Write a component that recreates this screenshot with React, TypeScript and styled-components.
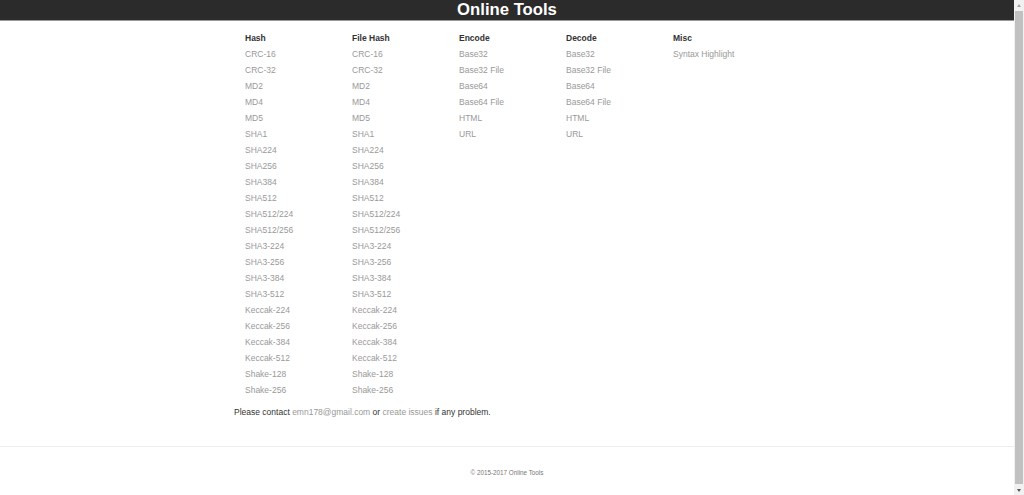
import React from "react";
import styled, { createGlobalStyle } from "styled-components";

const Global = createGlobalStyle`
  html, body { margin: 0; padding: 0; background: #fff; }
  body { font-family: "Liberation Sans", Arial, sans-serif; color: #333; }
`;

const Window = styled.div`
  display: flex;
  align-items: flex-start;
`;

const Page = styled.div`
  flex: 1;
  min-width: 0;
  min-height: 501px;
  display: flex;
  flex-direction: column;
`;

const ScrollBar = styled.div`
  position: sticky;
  top: 0;
  width: 10px;
  height: 495px;
  background: #f1f1f1;
  display: flex;
  flex-direction: column;
  align-items: center;
  flex-shrink: 0;
`;

const Arrow = styled.div<{ $down?: boolean }>`
  height: 10px;
  width: 10px;
  display: flex;
  align-items: center;
  justify-content: center;
  &::after {
    content: "";
    width: 0;
    height: 0;
    border-left: 2.5px solid transparent;
    border-right: 2.5px solid transparent;
    ${(p) => (p.$down ? "border-top: 3px solid #555;" : "border-bottom: 3px solid #a3a3a3;")}
  }
`;

const Thumb = styled.div`
  flex: 1;
  width: 8px;
  background: #c1c1c1;
  margin: 1px 0;
`;

const Header = styled.header`
  height: 20px;
  background: #2b2b2b;
  border-bottom: 1px solid #999;
  display: flex;
  align-items: center;
  justify-content: center;
`;

const Title = styled.h1`
  margin: 0;
  color: #fff;
  font-size: 16.7px;
  font-weight: bold;
  line-height: 20px;
`;

const Container = styled.main`
  width: 546px;
  margin: 0 auto;
  padding-top: 9px;
`;

const Columns = styled.div`
  display: grid;
  grid-template-columns: repeat(5, 107px);
  padding-left: 11px;
`;

const Column = styled.div`
  display: flex;
  flex-direction: column;
`;

const ColTitle = styled.div`
  font-size: 8.5px;
  font-weight: bold;
  color: #333;
  line-height: 16px;
`;

const ToolLink = styled.a`
  font-size: 8.5px;
  color: #999;
  line-height: 16px;
  text-decoration: none;
`;

const Contact = styled.p`
  margin: 6px 0 0;
  font-size: 8.5px;
  line-height: 16px;
  color: #333;
`;

const InlineLink = styled.a`
  color: #999;
  text-decoration: none;
`;

const Footer = styled.footer`
  margin-top: 26px;
  border-top: 1px solid #eee;
  height: 50px;
  display: flex;
  align-items: center;
  justify-content: center;
  font-size: 6.3px;
  color: #777;
`;

const hashes = [
  "CRC-16", "CRC-32", "MD2", "MD4", "MD5", "SHA1", "SHA224", "SHA256", "SHA384",
  "SHA512", "SHA512/224", "SHA512/256", "SHA3-224", "SHA3-256", "SHA3-384", "SHA3-512",
  "Keccak-224", "Keccak-256", "Keccak-384", "Keccak-512", "Shake-128", "Shake-256",
];
const codecs = ["Base32", "Base32 File", "Base64", "Base64 File", "HTML", "URL"];

const groups: { title: string; items: string[] }[] = [
  { title: "Hash", items: hashes },
  { title: "File Hash", items: hashes },
  { title: "Encode", items: codecs },
  { title: "Decode", items: codecs },
  { title: "Misc", items: ["Syntax Highlight"] },
];

export default function App() {
  return (
    <Window>
      <Global />
      <Page>
        <Header>
          <Title>Online Tools</Title>
        </Header>
        <Container>
          <Columns>
            {groups.map((g) => (
              <Column key={g.title}>
                <ColTitle>{g.title}</ColTitle>
                {g.items.map((it) => (
                  <ToolLink key={it} href="#">{it}</ToolLink>
                ))}
              </Column>
            ))}
          </Columns>
          <Contact>
            Please contact <InlineLink href="#">emn178@gmail.com</InlineLink> or{" "}
            <InlineLink href="#">create issues</InlineLink> if any problem.
          </Contact>
        </Container>
        <Footer>© 2015-2017 Online Tools</Footer>
      </Page>
      <ScrollBar>
        <Arrow />
        <Thumb />
        <Arrow $down />
      </ScrollBar>
    </Window>
  );
}
